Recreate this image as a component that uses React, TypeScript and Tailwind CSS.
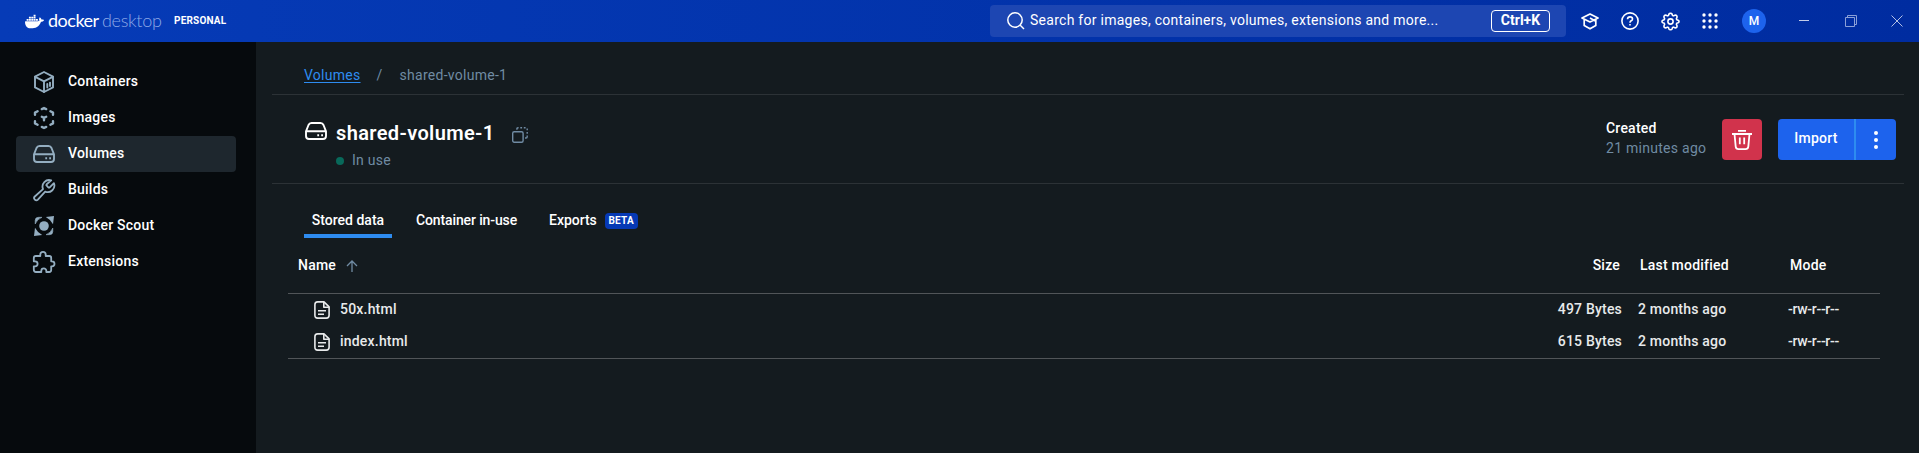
import React from "react";
import { SiDocker } from "react-icons/si";

type IconProps = { className?: string };

const ContainerIcon = ({ className }: IconProps) => (
  <svg viewBox="0 0 24 24" fill="none" stroke="currentColor" strokeWidth="1.9" strokeLinejoin="round" strokeLinecap="round" className={className}>
    <path d="M12 2 21 6.600v10.800L12 22l-9-4.600V6.600z" />
    <path d="M3.200 6.800 12 11.400l8.800-4.600M12 11.400V22" />
    <path d="M15.300 14v3.500M18 12.600v3.500" />
  </svg>
);

const ImageIcon = ({ className }: IconProps) => (
  <svg viewBox="0 0 24 24" fill="none" stroke="currentColor" strokeWidth="2.400" strokeLinejoin="round" strokeLinecap="round" className={className}>
    <path d="M9.800 3.100 12 2l2.200 1.100M18.400 5.200 21 6.600V8.800M21 15.200v2.200l-2.600 1.400M14.200 20.900 12 22l-2.200-1.100M5.600 18.800 3 17.400V15.200M3 8.800V6.600l2.600-1.400" />
    <path d="M9.800 10.800 12 11.900l2.200-1.100M12 11.900v2.300" />
  </svg>
);

const DriveIcon = ({ className }: IconProps) => (
  <svg viewBox="0 0 22 18" fill="none" stroke="currentColor" strokeWidth="1.900" strokeLinejoin="round" className={className}>
    <path d="M1 9.300 3.500 3Q4.400 1 6.500 1h9Q17.600 1 18.500 3L21 9.300V14q0 3-3 3H4q-3 0-3-3zM1 9.300h20" />
    <path d="M12.300 13.200h1.800M16.200 13.200H18" />
  </svg>
);

const WrenchIcon = ({ className }: IconProps) => (
  <svg viewBox="0 0 24 24" fill="none" stroke="currentColor" strokeWidth="1.800" strokeLinejoin="round" strokeLinecap="round" className={className}>
    <path d="M14.700 6.300a1 1 0 0 0 0 1.400l1.600 1.600a1 1 0 0 0 1.400 0l4.200-4.200a6.600 6.600 0 0 1-8.700 8.500l-7.300 8a2.100 2.100 0 0 1-3.100-3.100l8.200-7.400a6.600 6.600 0 0 1 8.200-8.700z" />
  </svg>
);

const ScoutIcon = ({ className }: IconProps) => (
  <svg viewBox="0 0 20 20" fill="currentColor" className={className}>
    <circle cx="10" cy="10" r="4.800" />
    <path d="M20 0 19 8.200Q16.600 3.500 11.800 1zM0 20l1-8.200Q3.400 16.500 8.200 19z" />
    <path d="M1.200 8V4.500Q1.200 1.300 4.500 1.300H8Q3.200 3 1.200 8zM18.800 12v3.500q0 3.200-3.300 3.200H12q4.800-1.700 6.800-6.700z" stroke="currentColor" strokeWidth=".6" />
  </svg>
);

const PuzzleIcon = ({ className }: IconProps) => (
  <svg viewBox="0 0 24 24" fill="none" stroke="currentColor" strokeWidth="1.800" strokeLinejoin="round" className={className}>
    <path d="M8.300 6V4.500a2.700 2.700 0 0 1 5.400 0V6h3.600q1.900 0 1.900 1.900v3.400h.8a2.500 2.500 0 0 1 0 5h-.8v3.800q0 1.900-1.900 1.900h-3v-1.200a2.500 2.500 0 0 0-5 0V22H4q-2.200 0-2.200-2.200v-3.500h1.300a2.500 2.500 0 0 0 0-5H1.800V8q0-2 2-2z" />
  </svg>
);

const CopyIcon = ({ className }: IconProps) => (
  <svg viewBox="0 0 16 16" fill="none" stroke="currentColor" strokeWidth="1.400" className={className}>
    <rect x=".7" y="4.800" width="10.400" height="10.400" rx="1.500" />
    <path d="M4.900 2.800V1.900Q4.900.8 6 .8h.6M8.300.8h1.800M11.800.8h1.800M15.200 1.500v1.800M15.200 5v1.800M15.200 8.600v1.200q0 1.200-1.200 1.200h-1" />
  </svg>
);

const FileIcon = ({ className }: IconProps) => (
  <svg viewBox="0 0 16 18" fill="none" stroke="currentColor" strokeWidth="1.600" strokeLinejoin="round" className={className}>
    <path d="M3.600.9H10l5.100 5v8.400q0 2.800-2.800 2.800H3.600Q.9 17.100.9 14.300V3.700Q.9.9 3.600.9z" />
    <path d="M9.800 1v5.200H15M4 9.700h8M4 13.300h6" />
  </svg>
);

const TrashIcon = ({ className }: IconProps) => (
  <svg viewBox="0 0 20 20" fill="none" stroke="currentColor" strokeWidth="1.800" className={className}>
    <path d="M6 .9h8M0 4h20" />
    <path d="m2.500 4 1.200 12.600Q4 19.100 6.500 19.100h7q2.500 0 2.800-2.500L17.500 4M7.800 7.600v6.600M12.200 7.600v6.600" />
  </svg>
);

const LearnIcon = ({ className }: IconProps) => (
  <svg viewBox="0 0 18 17" fill="none" stroke="currentColor" strokeWidth="1.700" strokeLinejoin="round" className={className}>
    <path d="M1 5 9 1l8 4-8 4zM3.200 6.500v6L9 15.800l5.800-3.300v-6M9 5l5.800 3.300" />
  </svg>
);

const GearIcon = ({ className }: IconProps) => (
  <svg viewBox="0 0 24 24" fill="none" stroke="currentColor" strokeWidth="2" strokeLinejoin="round" className={className}>
    <path d="M12 1.500q1.500 0 2 1.200l.6 1.700 1.200.5 1.700-.8q1.300-.4 2.200.5t.5 2.200l-.8 1.700.5 1.200 1.700.6q1.200.5 1.200 1.700t-1.200 1.700l-1.700.6-.5 1.200.8 1.700q.4 1.300-.5 2.200t-2.200.5l-1.700-.8-1.200.5-.6 1.700q-.5 1.200-2 1.200t-2-1.200l-.6-1.700-1.200-.5-1.700.8q-1.300.4-2.200-.5t-.5-2.200l.8-1.700-.5-1.200-1.700-.6Q1.200 13.200 1.200 12t1.200-1.700l1.700-.6.5-1.200-.8-1.700q-.4-1.300.5-2.200t2.200-.5l1.700.8 1.200-.5.6-1.700q.5-1.200 2-1.200z" />
    <circle cx="12" cy="12" r="3.300" />
  </svg>
);

const HelpIcon = ({ className }: IconProps) => (
  <svg viewBox="0 0 18 18" fill="none" stroke="currentColor" strokeWidth="1.600" className={className}>
    <circle cx="9" cy="9" r="8.100" />
    <path d="M6.500 7.200Q6.600 4.900 9 4.900t2.500 2q0 1.200-1.300 1.900Q9 9.500 9 10.700M9 11.900v1.700" />
  </svg>
);

const GridIcon = ({ className }: IconProps) => (
  <svg viewBox="0 0 16 16" fill="currentColor" className={className}>
    {[2, 8, 14].map((y) => [2, 8, 14].map((x) => <circle key={`${x}-${y}`} cx={x} cy={y} r="1.700" />))}
  </svg>
);

const navItems = [
  { label: "Containers", Icon: ContainerIcon, size: "size-6" },
  { label: "Images", Icon: ImageIcon, size: "size-6" },
  { label: "Volumes", Icon: DriveIcon, size: "h-[18px] w-[22px]", active: true },
  { label: "Builds", Icon: WrenchIcon, size: "size-6" },
  { label: "Docker Scout", Icon: ScoutIcon, size: "size-5" },
  { label: "Extensions", Icon: PuzzleIcon, size: "size-6" },
];

const files = [
  { name: "50x.html", size: "497 Bytes", modified: "2 months ago", mode: "-rw-r--r--" },
  { name: "index.html", size: "615 Bytes", modified: "2 months ago", mode: "-rw-r--r--" },
];

function Header() {
  return (
    <header className="flex h-[42px] shrink-0 items-center bg-linear-to-r from-[#063bb7] to-[#002ca0]">
      <div className="flex h-full w-[990px] items-center pl-[25px]">
        <SiDocker className="mr-[4px] size-[19px]" />
        <div className="flex pb-[3px] font-[Lato] text-[18px] leading-6">
          <span className="w-[54px] tracking-[-0.5px]">docker</span>
          <span className="w-[72px] font-light tracking-[-0.3px] text-[#8ea9e6]">desktop</span>
        </div>
        <span className="text-[10px] font-bold leading-4 tracking-[0.2px]">PERSONAL</span>
      </div>
      <div className="flex h-8 w-[576px] items-center rounded bg-[#1d46b2] pl-[17px] pr-4">
        <svg viewBox="0 0 18 18" fill="none" stroke="currentColor" strokeWidth="1.500" className="mr-[5px] size-[18px]">
          <circle cx="8" cy="8" r="7.200" />
          <path d="m13 13 4 4" />
        </svg>
        <span className="flex-1 pb-[2px] text-[14px] leading-5 tracking-[0.27px]">Search for images, containers, volumes, extensions and more...</span>
        <kbd className="flex h-[22px] w-[59px] items-center justify-center rounded border border-white pb-px font-[Roboto] text-[14px] font-bold">Ctrl+K</kbd>
      </div>
      <div className="flex flex-1 items-center pl-[15px]">
        <LearnIcon className="mr-[22px] h-[17px] w-[18px]" />
        <HelpIcon className="mr-[22px] size-[18px]" />
        <GearIcon className="mr-[22px] size-[19px]" />
        <GridIcon className="mr-6 size-4" />
        <span className="mr-[33px] flex size-6 items-center justify-center rounded-full bg-[#1d63ed] text-[12px] font-medium">M</span>
        <svg viewBox="0 0 10 10" stroke="#c3cdea" className="mr-9 size-[10px]"><path d="M0 4.500h10" /></svg>
        <svg viewBox="0 0 12 12" fill="none" stroke="#8ba0d8" className="mr-[34px] size-3"><path d="M.5 2.500h9v9h-9zM2.500 2.500v-2h9v9h-2" /></svg>
        <svg viewBox="0 0 12 12" stroke="#b3c0e5" className="size-3"><path d="m.5.5 11 11M11.500.5l-11 11" /></svg>
      </div>
    </header>
  );
}

function Sidebar() {
  return (
    <nav className="w-64 shrink-0 bg-[#060a0d] px-4 pt-[22px]">
      <div className="w-[220px]">
        {navItems.map(({ label, Icon, size, active }) => (
          <a key={label} className={active ? "flex h-9 items-center rounded bg-[#1e272e] pl-4" : "flex h-9 items-center pl-4"}>
            <span className="mr-3 flex w-6 justify-center text-[#94aec1]">
              <Icon className={size} />
            </span>
            <span className="pb-[2px] text-[14px] font-medium leading-5 tracking-[0.22px]">{label}</span>
          </a>
        ))}
      </div>
    </nav>
  );
}

function VolumeHeader() {
  return (
    <section className="flex h-[89px] justify-between border-b border-[#2c3236] pl-8 pr-2">
      <div className="pt-[24px]">
        <div className="flex h-[28px] items-center">
          <DriveIcon className="mb-[5px] ml-px mr-[9px] h-[18px] w-[22px]" />
          <h1 className="text-[20px] font-semibold leading-7 tracking-[0.37px]">shared-volume-1</h1>
          <CopyIcon className="ml-[17px] mt-[3px] size-4 text-[#708ba3]" />
        </div>
        <div className="flex items-center pl-8 pt-[3px]">
          <span className="mr-2 mt-px size-2 rounded-full bg-[#08695a]" />
          <span className="text-[14px] leading-5 tracking-[0.27px] text-[#708ba3]">In use</span>
        </div>
      </div>
      <div className="flex pt-[24px]">
        <div className="-mt-px w-[116px] text-[14px] leading-5">
          <div className="font-medium tracking-[0.22px]">Created</div>
          <div className="tracking-[0.27px] text-[#708ba3]">21 minutes ago</div>
        </div>
        <button className="mr-4 flex h-[41px] w-10 items-center justify-center rounded bg-[#d1334c]">
          <TrashIcon className="size-5" />
        </button>
        <div className="flex h-[41px] w-[118px] overflow-hidden rounded bg-[#1d63ed]">
          <button className="w-[78px] border-r-2 border-[#2e8cf0] pb-[3px] text-[14px] font-medium tracking-[0.25px]">Import</button>
          <button className="flex flex-1 items-center justify-center">
            <svg viewBox="0 0 4 18" fill="currentColor" className="h-[18px] w-1">
              <circle cx="2" cy="2" r="2" />
              <circle cx="2" cy="9" r="2" />
              <circle cx="2" cy="16" r="2" />
            </svg>
          </button>
        </div>
      </div>
    </section>
  );
}

function Tabs() {
  return (
    <div className="flex h-[54px] items-end pl-8 text-[14px] font-medium leading-5">
      <div className="h-[28px] w-[88px] border-b-4 border-[#2e8cf0] text-center">Stored data</div>
      <div className="h-[28px] pl-6 tracking-[-0.12px]">Container in-use</div>
      <div className="flex h-[28px] pl-8 tracking-[-0.05px]">
        Exports
        <span className="ml-2 mt-[3px] flex h-4 w-[33px] items-center justify-center rounded bg-[#0639b5] text-[10px] font-bold tracking-[0.2px]">BETA</span>
      </div>
    </div>
  );
}

function FileTable() {
  return (
    <div className="ml-4 mr-6 text-[14px] leading-5">
      <div className="flex h-[56px] border-b border-[#515558] pt-[17px] font-medium tracking-[0.22px]">
        <div className="flex flex-1 pl-[10px]">
          Name
          <svg viewBox="0 0 12 12" fill="none" stroke="#708ba3" strokeWidth="1.300" className="ml-[10px] mt-[5px] size-3">
            <path d="M6 12V1M1 6l5-5 5 5" />
          </svg>
        </div>
        <div className="w-20 pr-[2px] text-right">Size</div>
        <div className="w-[168px] pl-[18px]">Last modified</div>
        <div className="w-[90px]">Mode</div>
      </div>
      <div className="border-b border-[#515558]">
        {files.map((file) => (
          <div key={file.name} className="flex h-8 items-center pb-[2px] font-medium tracking-[0.2px] text-[#e8eaeb]">
            <div className="flex flex-1 items-center pl-[26px]">
              <FileIcon className="mr-[10px] mt-px h-[18px] w-4" />
              {file.name}
            </div>
            <div className="w-20 text-right">{file.size}</div>
            <div className="w-[166px] pl-4">{file.modified}</div>
            <div className="w-[92px] tracking-[-0.3px]">{file.mode}</div>
          </div>
        ))}
      </div>
    </div>
  );
}

export default function App() {
  return (
    <div className="flex h-[453px] flex-col overflow-hidden bg-[#141b1f] font-[Roboto,sans-serif] text-white">
      <Header />
      <div className="flex min-h-0 flex-1">
        <Sidebar />
        <main className="min-w-0 flex-1 pl-4 pr-[15px]">
          <div className="flex h-[53px] border-b border-[#2c3236] pl-8 pt-[23px] text-[14px] leading-5 tracking-[0.27px] text-[#708ba3]">
            <a className="text-[#2e8cf0] underline underline-offset-2">Volumes</a>
            <span className="w-[39px] pl-4">/</span>
            <span>shared-volume-1</span>
          </div>
          <VolumeHeader />
          <Tabs />
          <FileTable />
        </main>
      </div>
    </div>
  );
}
